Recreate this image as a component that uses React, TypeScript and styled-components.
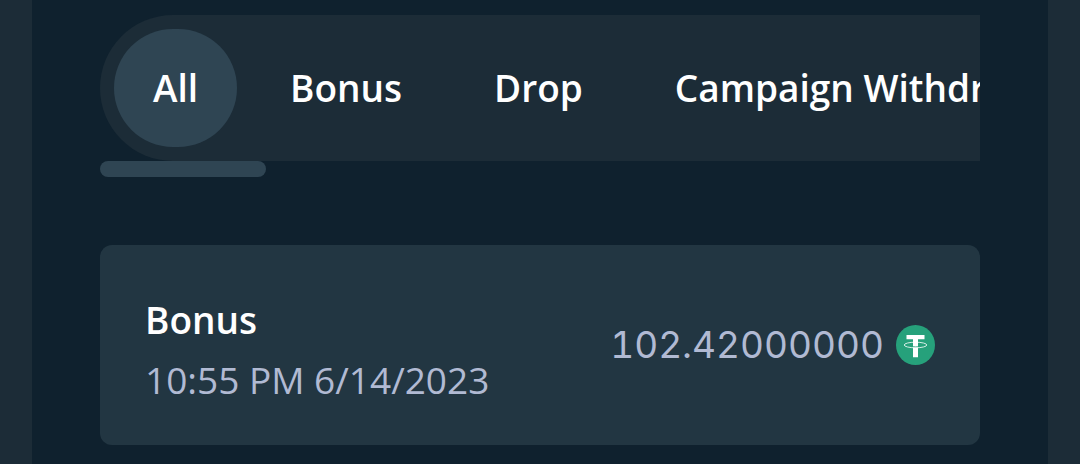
import React, { useState } from "react";
import styled, { createGlobalStyle } from "styled-components";

const GlobalStyle = createGlobalStyle`
  *, *::before, *::after { box-sizing: border-box; }
  body {
    margin: 0;
    background: #1c2c37;
    color: #ffffff;
    font-family: "Open Sans", sans-serif;
    font-size: 37px;
  }
`;

const Page = styled.div`
  min-height: 100vh;
  padding: 0 32px;
  display: flex;
`;

const Panel = styled.main`
  flex: 1;
  min-width: 0;
  padding: 15px 68px 19px;
  background: #0f212e;
`;

const TabScroller = styled.div`
  overflow-x: auto;
  scrollbar-width: none;
`;

const TabList = styled.div`
  display: flex;
  gap: 14px;
  width: max-content;
  padding: 14px;
  border-radius: 73px;
  background: #1c2c37;
`;

const Tab = styled.button<{ $active: boolean }>`
  height: 118px;
  padding: 0 39px 2px;
  border: 0;
  border-radius: 60px;
  background: ${({ $active }) => ($active ? "#2f4553" : "transparent")};
  color: inherit;
  font: inherit;
  font-weight: 600;
  white-space: nowrap;
  cursor: pointer;
`;

const ScrollThumb = styled.div`
  width: 166px;
  height: 16px;
  border-radius: 8px;
  background: #2f4553;
`;

const Card = styled.article`
  display: flex;
  align-items: center;
  justify-content: space-between;
  margin-top: 68px;
  padding: 35px 45px;
  border-radius: 12px;
  background: #223642;
  line-height: 60px;
`;

const Details = styled.div`
  padding-top: 10px;
`;

const Title = styled.h2`
  margin: 0;
  font-size: inherit;
  font-weight: 600;
`;

const When = styled.time`
  display: block;
  color: #b1bad3;
`;

const Amount = styled.div`
  display: flex;
  align-items: center;
  gap: 12px;
  color: #b1bad3;
  font-family: Inter, sans-serif;
  font-variant-numeric: tabular-nums;
`;

const TetherIcon = () => (
  <svg width="39" height="40" viewBox="0 0 39 40" aria-label="USDT" role="img">
    <ellipse cx="19.5" cy="20" rx="19.5" ry="20" fill="#26a17b" />
    <ellipse cx="19.5" cy="20" rx="11.3" ry="2.8" fill="none" stroke="#fff" strokeWidth="0.8" />
    <path d="M10.5 10h18v4.200h-6.500V32.300h-5V14.200h-6.500z" fill="#fff" />
    <path d="M17 21.700q2.500 0.300 5 0" fill="none" stroke="#26a17b" strokeWidth="0.8" />
  </svg>
);

const filters = ["All", "Bonus", "Drop", "Campaign Withdrawal"];

export default function App() {
  const [active, setActive] = useState("All");
  return (
    <>
      <GlobalStyle />
      <Page>
        <Panel>
          <TabScroller>
            <TabList role="tablist">
              {filters.map((name) => (
                <Tab
                  key={name}
                  type="button"
                  role="tab"
                  aria-selected={active === name}
                  $active={active === name}
                  onClick={() => setActive(name)}
                >
                  {name}
                </Tab>
              ))}
            </TabList>
          </TabScroller>
          <ScrollThumb />
          <Card>
            <Details>
              <Title>Bonus</Title>
              <When dateTime="2023-06-14T22:55">10:55 PM 6/14/2023</When>
            </Details>
            <Amount>
              <span>102.42000000</span>
              <TetherIcon />
            </Amount>
          </Card>
        </Panel>
      </Page>
    </>
  );
}
